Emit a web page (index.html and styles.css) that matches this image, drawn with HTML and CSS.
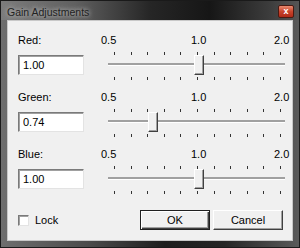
FILE: index.html
```html
<!DOCTYPE html>
<html lang="en">
<head>
  <meta charset="UTF-8" />
  <title>Gain Adjustments</title>
  <link rel="stylesheet" href="styles.css">
</head>
<body>
  <div class="window">
    <div class="titlebar">
      <span class="title">Gain Adjustments</span>
      <span class="close">x</span>
    </div>
    <div class="client">

      <!-- Red -->
      <div class="gain">
        <div class="label">Red:</div>
        <div class="scale"><span class="s0">0.5</span><span class="s1">1.0</span><span class="s2">2.0</span></div>
        <input class="field" type="text" value="1.00">
        <div class="slider">
          <div class="ticks"><i></i><i></i><i></i><i></i><i></i><i></i><i></i><i></i><i></i><i></i><i></i></div>
          <div class="track"></div>
          <div class="ticks bottom"><i></i><i></i><i></i><i></i><i></i><i></i><i></i><i></i><i></i><i></i><i></i></div>
          <div class="thumb" style="left: 93px"></div>
        </div>
      </div>

      <!-- Green -->
      <div class="gain">
        <div class="label">Green:</div>
        <div class="scale"><span class="s0">0.5</span><span class="s1">1.0</span><span class="s2">2.0</span></div>
        <input class="field" type="text" value="0.74">
        <div class="slider">
          <div class="ticks"><i></i><i></i><i></i><i></i><i></i><i></i><i></i><i></i><i></i><i></i><i></i></div>
          <div class="track"></div>
          <div class="ticks bottom"><i></i><i></i><i></i><i></i><i></i><i></i><i></i><i></i><i></i><i></i><i></i></div>
          <div class="thumb" style="left: 47px"></div>
        </div>
      </div>

      <!-- Blue -->
      <div class="gain">
        <div class="label">Blue:</div>
        <div class="scale"><span class="s0">0.5</span><span class="s1">1.0</span><span class="s2">2.0</span></div>
        <input class="field" type="text" value="1.00">
        <div class="slider">
          <div class="ticks"><i></i><i></i><i></i><i></i><i></i><i></i><i></i><i></i><i></i><i></i><i></i></div>
          <div class="track"></div>
          <div class="ticks bottom"><i></i><i></i><i></i><i></i><i></i><i></i><i></i><i></i><i></i><i></i><i></i></div>
          <div class="thumb" style="left: 93px"></div>
        </div>
      </div>

      <div class="footer">
        <label class="lock"><span class="check"></span>Lock</label>
        <div class="buttons">
          <button class="btn default">OK</button>
          <button class="btn">Cancel</button>
        </div>
      </div>

    </div>
  </div>
</body>
</html>
```

FILE: styles.css
```css
body {
  margin: 0;
  font-family: 'Liberation Sans', Arial, sans-serif;
  font-size: 11px;
  color: #000;
  background: #fff;
}

.window {
  width: 300px;
  height: 248px;
  box-sizing: border-box;
  padding: 0 6px 6px;
  background: linear-gradient(to right, #6e6e6e 0%, #4a4a4a 30%, #1e1e1e 55%, #262626 75%, #5a5a5a 100%);
  border: 1px solid #1a1a1a;
  display: flex;
  flex-direction: column;
}

.titlebar {
  height: 19px;
  display: flex;
  align-items: center;
  justify-content: space-between;
  margin: 0 -6px;
  padding: 0 6px 0 6px;
  background: linear-gradient(to right, #7c7c7c 0%, #606060 25%, #262626 50%, #161616 70%, #3c3c3c 90%, #555 100%);
}

.title {
  font-size: 10.5px;
  color: #222;
  text-shadow: 0 0 4px #bbb, 0 0 6px #aaa;
  margin-top: 2px;
}

.close {
  width: 14px;
  height: 11px;
  margin-top: 1px;
  margin-right: -1px;
  border: 1px solid #4a1a12;
  border-radius: 2px;
  background: linear-gradient(#e88a70, #c8442c 50%, #b02a18);
  color: #fff;
  font-size: 9px;
  font-weight: bold;
  line-height: 10px;
  text-align: center;
}

.client {
  flex: 1;
  background: #f0f0f0;
  border: 1px solid #c8c8c8;
  padding: 12px 4px 0 10px;
  display: flex;
  flex-direction: column;
  gap: 9px;
}

.gain {
  display: grid;
  grid-template-columns: 66px 190px;
  grid-template-rows: 14px 31px;
  column-gap: 17px;
  row-gap: 3px;
}

.label {
  line-height: 14px;
}

.scale {
  display: flex;
  line-height: 14px;
}

.scale .s0 { width: 90px; }
.scale .s1 { width: 83px; }

.field {
  width: 66px;
  height: 20px;
  box-sizing: border-box;
  margin: 5px 0 0;
  padding: 0 4px;
  font-family: inherit;
  font-size: 11px;
  background: #fff;
  border: 1px solid;
  border-color: #7a7a7a #e3e3e3 #e3e3e3 #7a7a7a;
  box-shadow: inset 1px 1px 0 #a0a0a0;
  outline: none;
}

.slider {
  position: relative;
}

.ticks {
  display: flex;
  justify-content: space-between;
  margin: 2px 10px 0 13px;
  height: 3px;
}

.ticks i {
  width: 1px;
  height: 3px;
  background: #333;
}

.ticks.bottom {
  margin-top: 11px;
}

.ticks.bottom i {
  height: 3px;
}

.track {
  margin: 8px 6px 0 7px;
  height: 2px;
  background: #a0a0a0;
  border-bottom: 1px solid #fff;
}

.thumb {
  position: absolute;
  top: 5px;
  width: 10px;
  height: 20px;
  box-sizing: border-box;
  background: #f0f0f0;
  border: 1px solid;
  border-color: #fff #404040 #404040 #fff;
  box-shadow: inset -1px -1px 0 #a0a0a0;
}

.footer {
  display: flex;
  justify-content: space-between;
  align-items: center;
  margin-top: 6px;
  padding-right: 5px;
}

.lock {
  display: flex;
  align-items: center;
  gap: 6px;
}

.check {
  width: 11px;
  height: 11px;
  box-sizing: border-box;
  background: #fff;
  border: 1px solid;
  border-color: #7a7a7a #e3e3e3 #e3e3e3 #7a7a7a;
  box-shadow: inset 1px 1px 0 #a0a0a0;
}

.buttons {
  display: flex;
  gap: 3px;
}

.btn {
  width: 70px;
  height: 20px;
  padding: 0;
  font-family: inherit;
  font-size: 11px;
  color: #000;
  background: #f0f0f0;
  border: 1px solid;
  border-color: #fff #404040 #404040 #fff;
  box-shadow: inset -1px -1px 0 #a0a0a0;
}

.btn.default {
  border-color: #202020;
  box-shadow: inset 1px 1px 0 #fff, inset -1px -1px 0 #404040, inset -2px -2px 0 #a0a0a0;
}
```
